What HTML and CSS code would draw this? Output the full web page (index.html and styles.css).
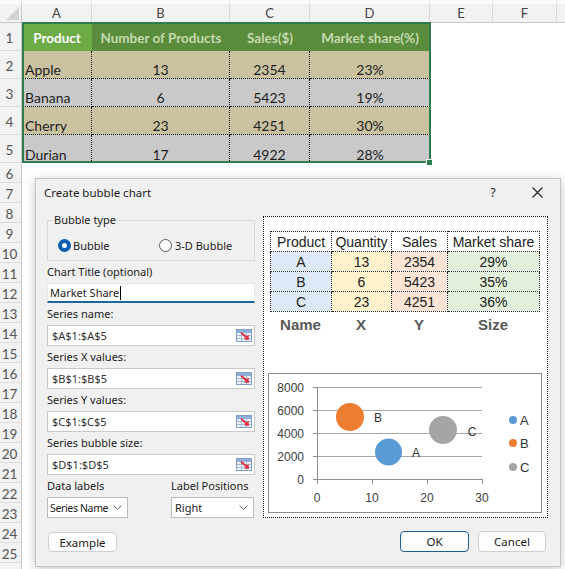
FILE: index.html
```html
<!DOCTYPE html>
<html>
<head>
<meta charset="utf-8">
<link rel="stylesheet" href="styles.css">
</head>
<body>
<div class="sheet">
  <div class="corner"><span class="tri"></span></div>
  <div class="ch">A</div><div class="ch">B</div><div class="ch">C</div><div class="ch">D</div><div class="ch">E</div><div class="ch">F</div><div class="ch last"></div>

  <div class="rh">1</div>
  <div class="c hd active">Product</div><div class="c hd">Number of Products</div><div class="c hd">Sales($)</div><div class="c hd">Market share(%)</div>
  <div class="e"></div><div class="e"></div><div class="e"></div>

  <div class="rh">2</div>
  <div class="c d tan ca vb hb">Apple</div><div class="c d tan vb hb">13</div><div class="c d tan vb hb">2354</div><div class="c d tan hb">23%</div>
  <div class="e"></div><div class="e"></div><div class="e"></div>

  <div class="rh">3</div>
  <div class="c d gry ca vb hb">Banana</div><div class="c d gry vb hb">6</div><div class="c d gry vb hb">5423</div><div class="c d gry hb">19%</div>
  <div class="e"></div><div class="e"></div><div class="e"></div>

  <div class="rh">4</div>
  <div class="c d tan ca vb hb">Cherry</div><div class="c d tan vb hb">23</div><div class="c d tan vb hb">4251</div><div class="c d tan hb">30%</div>
  <div class="e"></div><div class="e"></div><div class="e"></div>

  <div class="rh">5</div>
  <div class="c d gry ca vb">Durian</div><div class="c d gry vb">17</div><div class="c d gry vb">4922</div><div class="c d gry">28%</div>
  <div class="e"></div><div class="e"></div><div class="e"></div>

  <div class="rh s">6</div><div class="rest"></div>
  <div class="rh s">7</div><div class="rest"></div>
  <div class="rh s">8</div><div class="rest"></div>
  <div class="rh s">9</div><div class="rest"></div>
  <div class="rh s">10</div><div class="rest"></div>
  <div class="rh s">11</div><div class="rest"></div>
  <div class="rh s">12</div><div class="rest"></div>
  <div class="rh s">13</div><div class="rest"></div>
  <div class="rh s">14</div><div class="rest"></div>
  <div class="rh s">15</div><div class="rest"></div>
  <div class="rh s">16</div><div class="rest"></div>
  <div class="rh s">17</div><div class="rest"></div>
  <div class="rh s">18</div><div class="rest"></div>
  <div class="rh s">19</div><div class="rest"></div>
  <div class="rh s">20</div><div class="rest"></div>
  <div class="rh s">21</div><div class="rest"></div>
  <div class="rh s">22</div><div class="rest"></div>
  <div class="rh s">23</div><div class="rest"></div>
  <div class="rh s">24</div><div class="rest"></div>
  <div class="rh s">25</div><div class="rest"></div>
  <div class="rh s"></div><div class="rest"></div>
</div>

<div class="selection"></div>
<div class="handle"></div>

<div class="dialog">
  <div class="titlebar">
    <span class="title">Create bubble chart</span>
    <span class="help">?</span>
    <span class="close"><svg width="11" height="11" viewBox="0 0 11 11"><path d="M0.5 0.5L10.5 10.5M10.5 0.5L0.5 10.5" stroke="#222" stroke-width="1.1"/></svg></span>
  </div>
  <div class="body">
    <div class="main">
      <div class="left">
        <fieldset class="group">
          <legend>Bubble type</legend>
          <div class="radios">
            <span class="radio first"><span class="dot on"></span>Bubble</span>
            <span class="radio"><span class="dot"></span>3-D Bubble</span>
          </div>
        </fieldset>
        <div class="lbl">Chart Title (optional)</div>
        <div class="tinput">Market Share<span class="caret"></span></div>
        <div class="lbl">Series name:</div>
        <div class="rinput"><span>$A$1:$A$5</span>
          <svg class="pick" width="16" height="13" viewBox="0 0 16 13"><rect x="0.5" y="0.5" width="15" height="12" fill="#eef3fb" stroke="#7f9fc8"/><rect x="1" y="1" width="14" height="3" fill="#8eaedb"/><path d="M1 6.5H15M1 9.5H15M5.5 4V12M10.5 4V12" stroke="#a3bad8"/><path d="M5.5 3L11 7.2L12.5 5.6L13 11L8 10.6L9.5 9L4.5 4.6Z" fill="#e2323d"/></svg>
        </div>
        <div class="lbl">Series X values:</div>
        <div class="rinput"><span>$B$1:$B$5</span>
          <svg class="pick" width="16" height="13" viewBox="0 0 16 13"><rect x="0.5" y="0.5" width="15" height="12" fill="#eef3fb" stroke="#7f9fc8"/><rect x="1" y="1" width="14" height="3" fill="#8eaedb"/><path d="M1 6.5H15M1 9.5H15M5.5 4V12M10.5 4V12" stroke="#a3bad8"/><path d="M5.5 3L11 7.2L12.5 5.6L13 11L8 10.6L9.5 9L4.5 4.6Z" fill="#e2323d"/></svg>
        </div>
        <div class="lbl">Series Y values:</div>
        <div class="rinput"><span>$C$1:$C$5</span>
          <svg class="pick" width="16" height="13" viewBox="0 0 16 13"><rect x="0.5" y="0.5" width="15" height="12" fill="#eef3fb" stroke="#7f9fc8"/><rect x="1" y="1" width="14" height="3" fill="#8eaedb"/><path d="M1 6.5H15M1 9.5H15M5.5 4V12M10.5 4V12" stroke="#a3bad8"/><path d="M5.5 3L11 7.2L12.5 5.6L13 11L8 10.6L9.5 9L4.5 4.6Z" fill="#e2323d"/></svg>
        </div>
        <div class="lbl">Series bubble size:</div>
        <div class="rinput"><span>$D$1:$D$5</span>
          <svg class="pick" width="16" height="13" viewBox="0 0 16 13"><rect x="0.5" y="0.5" width="15" height="12" fill="#eef3fb" stroke="#7f9fc8"/><rect x="1" y="1" width="14" height="3" fill="#8eaedb"/><path d="M1 6.5H15M1 9.5H15M5.5 4V12M10.5 4V12" stroke="#a3bad8"/><path d="M5.5 3L11 7.2L12.5 5.6L13 11L8 10.6L9.5 9L4.5 4.6Z" fill="#e2323d"/></svg>
        </div>
        <div class="pair">
          <div class="lbl">Data labels</div>
          <div class="lbl">Label Positions</div>
        </div>
        <div class="pair">
          <div class="select s1"><span class="sv">Series Name</span><svg width="9" height="5" viewBox="0 0 9 5"><path d="M0.5 0.5L4.5 4.5L8.5 0.5" fill="none" stroke="#666"/></svg></div>
          <div class="select s2"><span class="sv">Right</span><svg width="9" height="5" viewBox="0 0 9 5"><path d="M0.5 0.5L4.5 4.5L8.5 0.5" fill="none" stroke="#666"/></svg></div>
        </div>
      </div>
      <div class="preview">
        <table class="ptable">
          <colgroup><col class="k1"><col class="k2"><col class="k3"><col class="k4"></colgroup>
          <tr><td>Product</td><td>Quantity</td><td>Sales</td><td>Market share</td></tr>
          <tr><td class="cn">A</td><td class="cx">13</td><td class="cy">2354</td><td class="cs">29%</td></tr>
          <tr><td class="cn">B</td><td class="cx">6</td><td class="cy">5423</td><td class="cs">35%</td></tr>
          <tr><td class="cn">C</td><td class="cx">23</td><td class="cy">4251</td><td class="cs">36%</td></tr>
        </table>
        <div class="plabels"><span>Name</span><span>X</span><span>Y</span><span>Size</span></div>
        <div class="chart">
          <svg width="272" height="138" viewBox="0 0 272 138">
            <g stroke="#a6a6a6" stroke-width="1">
              <path d="M48 13.5H213M48 36.5H213M48 59.5H213M48 82.5H213"/>
            </g>
            <g stroke="#8c8c8c" stroke-width="1">
              <path d="M48.5 13V105.5M44 13.5H48M44 36.5H48M44 59.5H48M44 82.5H48M44 105.5H213M48.5 105V110M103.5 105V110M158.5 105V110M213.5 105V110"/>
            </g>
            <g font-family="Liberation Sans, Arial, sans-serif" font-size="12" fill="#404040" text-anchor="end">
              <text x="35" y="18">8000</text>
              <text x="35" y="41">6000</text>
              <text x="35" y="64">4000</text>
              <text x="35" y="87">2000</text>
              <text x="35" y="110">0</text>
            </g>
            <g font-family="Liberation Sans, Arial, sans-serif" font-size="12" fill="#404040" text-anchor="middle">
              <text x="48" y="128">0</text>
              <text x="103" y="128">10</text>
              <text x="158" y="128">20</text>
              <text x="213" y="128">30</text>
            </g>
            <circle cx="81" cy="43" r="14" fill="#ED7D31"/>
            <circle cx="119.5" cy="78" r="13.5" fill="#5B9BD5"/>
            <circle cx="174" cy="56" r="14" fill="#A5A5A5"/>
            <g font-family="Liberation Sans, Arial, sans-serif" font-size="12" fill="#333" text-anchor="middle">
              <text x="109" y="48">B</text>
              <text x="147" y="83">A</text>
              <text x="203" y="62">C</text>
            </g>
            <circle cx="244" cy="46" r="4" fill="#5B9BD5"/>
            <circle cx="244" cy="69" r="4" fill="#ED7D31"/>
            <circle cx="244" cy="93" r="4" fill="#A5A5A5"/>
            <g font-family="Liberation Sans, Arial, sans-serif" font-size="13" fill="#333">
              <text x="251" y="51">A</text>
              <text x="251" y="74">B</text>
              <text x="251" y="98">C</text>
            </g>
          </svg>
        </div>
      </div>
    </div>
    <div class="footer">
      <button class="btn example">Example</button>
      <span class="spacer"></span>
      <button class="btn ok">OK</button>
      <button class="btn cancel">Cancel</button>
    </div>
  </div>
</div>
</body>
</html>
```
FILE: styles.css
```css
* { box-sizing: border-box; margin: 0; padding: 0; }
body {
  margin: 0;
  width: 565px;
  height: 569px;
  overflow: hidden;
  background: #fff;
  position: relative;
  font-family: "Lato", "Liberation Sans", sans-serif;
}

/* ---------- spreadsheet ---------- */
.sheet {
  display: grid;
  grid-template-columns: 22px 70px 138px 80px 120px 63px 64px 8px;
  grid-template-rows: 23px repeat(5, 28px) repeat(21, 20px);
}
.corner {
  background: #f2f2f2;
  border-right: 1px solid #c8c8c8;
  border-bottom: 1px solid #c8c8c8;
  border-top: 4px solid #fafafa;
  display: flex;
  align-items: flex-end;
  justify-content: flex-end;
  padding: 0 2px 2px 0;
}
.tri {
  width: 0; height: 0;
  border-left: 13px solid transparent;
  border-bottom: 13px solid #d2d2d2;
}
.ch {
  background: #f2f2f2;
  border-top: 4px solid #fafafa;
  border-right: 1px solid #d9d9d9;
  border-bottom: 1px solid #c8c8c8;
  display: flex;
  align-items: center;
  justify-content: center;
  font-size: 13px;
  color: #444;
}
.ch.last { border-right: none; }
.rh {
  background: #f2f2f2;
  border-right: 1px solid #c8c8c8;
  border-bottom: 1px solid #dcdcdc;
  display: flex;
  align-items: center;
  justify-content: center;
  padding-right: 2px;
  padding-top: 2px;
  font-size: 13.5px;
  color: #555;
}
.c {
  display: flex;
  justify-content: center;
  align-items: center;
  font-size: 14px;
  color: #1e1e1e;
  white-space: nowrap;
}
.hd {
  background: #5b8c3d;
  color: #c3dbae;
  font-weight: bold;
  font-size: 13.5px;
  padding-top: 2px;
}
.hd.active { background: #6dab46; color: #fff; }
.d { align-items: flex-end; line-height: 16px; padding-bottom: 0; }
.ca { justify-content: flex-start; padding-left: 3px; }
.tan { background: #cbc2a1; }
.gry { background: #c9c9c9; }
.vb { border-right: 1px dotted #111; }
.hb { border-bottom: 1px dotted #111; }
.e { background: #fff; }
.rest { grid-column: span 7; background: #fff; }

.selection {
  position: absolute;
  left: 22px; top: 22px;
  width: 409px; height: 141px;
  border: 2px solid #2f7b50;
}
.handle {
  position: absolute;
  left: 426px; top: 159px;
  width: 7px; height: 7px;
  background: #2f7b50;
  border: 1px solid #fff;
}

/* ---------- dialog ---------- */
.dialog {
  position: absolute;
  left: 35px; top: 178px;
  width: 526px; height: 389px;
  background: #f0f0f0;
  border: 1px solid #c4c4c4;
  box-shadow: 0 2px 10px rgba(0,0,0,0.22);
  font-family: "Noto Sans", "Liberation Sans", sans-serif;
  font-size: 11px;
  color: #1b1b1b;
  display: flex;
  flex-direction: column;
}
.titlebar {
  height: 29px;
  display: flex;
  align-items: center;
  padding-left: 8px;
  padding-right: 13px;
}
.title { font-size: 11.5px; }
.help {
  margin-left: auto;
  width: 20px;
  text-align: center;
  font-size: 12px;
  color: #222;
}
.close {
  margin-left: 24px;
  width: 20px;
  display: flex;
  justify-content: center;
}
.body {
  padding: 7px 12px 14px 11px;
  display: flex;
  flex-direction: column;
}
.main {
  display: flex;
  gap: 8px;
  align-items: stretch;
}
.left {
  width: 208px;
  display: flex;
  flex-direction: column;
}
.group {
  border: 1px solid #dadada;
  padding: 8px 5px 5px 5px;
  min-width: 0;
}
.group legend {
  padding: 0 1px;
  line-height: 14px;
  font-size: 11px;
}
.radios {
  display: flex;
  height: 20px;
  align-items: center;
}
.radio {
  display: flex;
  align-items: center;
  gap: 2px;
}
.radio.first { width: 101px; margin-left: 5px; }
.radio:not(.first) { gap: 3px; }
.dot {
  width: 13px; height: 13px;
  border-radius: 50%;
  border: 1px solid #5c5c5c;
  background: #fbfbfb;
}
.dot.on {
  border: 4px solid #0a5fb0;
  background: #fff;
}
.lbl {
  height: 22px;
  line-height: 21px;
  white-space: nowrap;
}
.tinput {
  height: 20px;
  background: #fff;
  border: 1px solid #e6e6e6;
  border-bottom: 2px solid #1a679c;
  display: flex;
  align-items: center;
  padding-left: 2px;
}
.caret {
  display: inline-block;
  width: 1px;
  height: 14px;
  background: #000;
  margin-left: 1px;
}
.rinput {
  height: 21px;
  background: #fff;
  border: 1px solid #c9c9c9;
  display: flex;
  align-items: center;
  justify-content: space-between;
  padding-left: 4px;
  padding-right: 2px;
  color: #333;
}
.pair {
  display: grid;
  grid-template-columns: 124px 84px;
}
.select {
  height: 21px;
  background: #fff;
  border: 1px solid #bcbcbc;
  display: flex;
  align-items: center;
  justify-content: space-between;
  padding: 0 5px 0 3px;
  white-space: nowrap;
}
.sv { white-space: nowrap; }
.s1 { width: 81px; font-size: 10.5px; letter-spacing: -0.35px; padding-left: 2px; }
.s2 { width: 83px; }

.preview {
  width: 285px;
  margin-top: 3px;
  border: 1px dotted #111;
  background: #fff;
  padding: 14px 5px 4px 4px;
  display: flex;
  flex-direction: column;
}
.ptable {
  margin-left: 2px;
  width: 269px;
  border-collapse: collapse;
  table-layout: fixed;
  font-family: "Liberation Sans", Arial, sans-serif;
  font-size: 14px;
  color: #222;
  background: #fff;
}
.k1 { width: 61px; }
.k2 { width: 60px; }
.k3 { width: 56px; }
.k4 { width: 92px; }
.ptable td {
  border: 1px dotted #222;
  height: 20px;
  padding: 0;
  text-align: center;
  line-height: 18px;
  white-space: nowrap;
  overflow: hidden;
}
.cn { background: #dde9f6; }
.cx { background: #fff2cc; }
.cy { background: #fce4d6; }
.cs { background: #e2efda; }
.plabels {
  margin-left: 2px;
  margin-top: 1px;
  height: 22px;
  display: grid;
  grid-template-columns: 61px 60px 56px 92px;
  align-items: center;
  text-align: center;
  font-family: "Liberation Sans", Arial, sans-serif;
  font-weight: bold;
  font-size: 15px;
  color: #595959;
}
.chart {
  margin-top: auto;
  width: 274px;
  height: 140px;
  border: 1px solid #8a8a8a;
  background: #fff;
}
.chart svg { display: block; }

.footer {
  margin-top: 13px;
  height: 21px;
  display: flex;
  align-items: stretch;
  padding-right: 2px;
}
.spacer { flex: 1; }
.btn {
  font-family: "Noto Sans", "Liberation Sans", sans-serif;
  font-size: 11.5px;
  color: #1b1b1b;
  background: #fdfdfd;
  border: 1px solid #cfcfcf;
  border-radius: 4px;
  height: 21px;
}
.example { width: 69px; margin-left: 1px; margin-top: 1px; height: 20px; }
.ok { width: 69px; border-color: #1c5f94; }
.cancel { width: 68px; margin-left: 9px; }
```
